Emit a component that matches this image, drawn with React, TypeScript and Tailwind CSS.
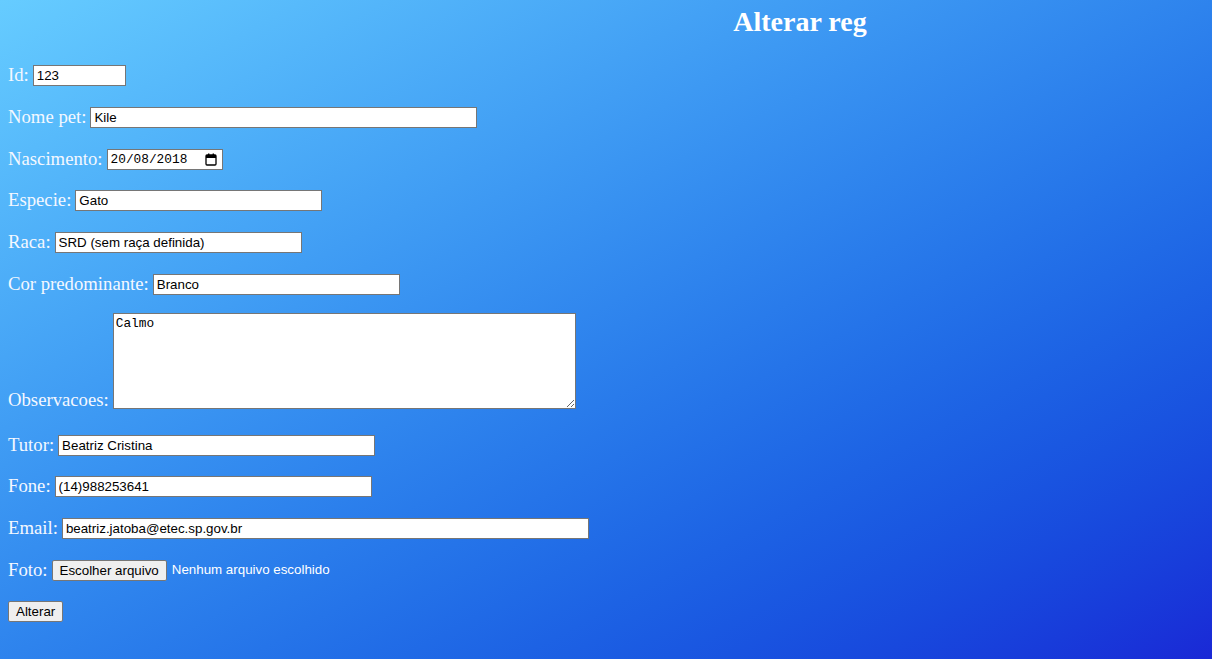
import React from "react";

const serif = { fontFamily: '"Liberation Serif", "Times New Roman", serif' };
const label = "text-[18.72px] leading-[21px] text-[#f4f8ff] whitespace-nowrap";
const input =
  "h-[21px] border border-[#767676] bg-white px-[3px] text-[13.33px] text-black outline-none";
const btn =
  "h-[21px] rounded-[2px] border border-[#767676] bg-[#efefef] px-[7px] text-[13.33px] leading-[19px] text-black";

function Row({ name, children }: { name: string; children: React.ReactNode }) {
  return (
    <div className="flex h-[21px] items-center gap-[4px]">
      <span className={`${label} pb-[2px]`} style={serif}>
        {name}
      </span>
      {children}
    </div>
  );
}

function CalendarIcon() {
  return (
    <svg width="12" height="13" viewBox="0 0 12 13" className="shrink-0">
      <rect x="1" y="2" width="10" height="10" fill="none" stroke="#000" strokeWidth="1.3" rx="1" />
      <rect x="1" y="2" width="10" height="3" fill="#000" />
      <rect x="3" y="0.5" width="1.4" height="2.5" fill="#000" />
      <rect x="7.6" y="0.5" width="1.4" height="2.5" fill="#000" />
    </svg>
  );
}

export default function App() {
  return (
    <div className="min-h-screen w-full bg-gradient-to-br from-[#66ccff] to-[#1a28d6] px-[8px]" style={serif}>
      {/* Title */}
      <div className="flex h-[38px] items-end justify-center pl-[388px]">
        <h1 className="text-[28px] font-bold leading-[32px] text-white">Alterar reg</h1>
      </div>

      <form
        className="mt-[27px] flex flex-col gap-[20.8px]"
        style={{ fontFamily: '"Liberation Sans", Arial, sans-serif' }}
        onSubmit={(e) => e.preventDefault()}
      >
        <Row name="Id:">
          <input className={`${input} w-[93px]`} defaultValue="123" />
        </Row>
        <Row name="Nome pet:">
          <input className={`${input} w-[387px]`} defaultValue="Kile" />
        </Row>
        <Row name="Nascimento:">
          <div className={`${input} flex w-[116px] items-center justify-between pl-[3px] pr-[5px]`}>
            <span className="text-[12.8px]" style={{ fontFamily: '"Liberation Mono", "DejaVu Sans Mono", monospace' }}>
              20/08/2018
            </span>
            <CalendarIcon />
          </div>
        </Row>
        <Row name="Especie:">
          <input className={`${input} w-[247px]`} defaultValue="Gato" />
        </Row>
        <Row name="Raca:">
          <input className={`${input} w-[247px]`} defaultValue="SRD (sem raça definida)" />
        </Row>
        <Row name="Cor predominante:">
          <input className={`${input} w-[247px]`} defaultValue="Branco" />
        </Row>

        <div className="-mt-[3px] mb-[5px] flex h-[96px] items-end gap-[4px]">
          <span className={`${label} -mb-[1px]`} style={serif}>
            Observacoes:
          </span>
          <textarea
            className="h-[96px] w-[463px] border border-[#767676] bg-white p-[2px] text-[12.8px] leading-[15px] text-black outline-none"
            style={{ fontFamily: '"Liberation Mono", "DejaVu Sans Mono", monospace' }}
            defaultValue="Calmo"
          />
        </div>

        <Row name="Tutor:">
          <input className={`${input} w-[317px]`} defaultValue="Beatriz Cristina" />
        </Row>
        <Row name="Fone:">
          <input className={`${input} w-[317px]`} defaultValue="(14)988253641" />
        </Row>
        <Row name="Email:">
          <input className={`${input} w-[527px]`} defaultValue="beatriz.jatoba@etec.sp.gov.br" />
        </Row>
        <Row name="Foto:">
          <div className="flex items-center gap-[5px]">
            <button type="button" className={btn}>
              Escolher arquivo
            </button>
            <span className="text-[13.33px] text-white">Nenhum arquivo escolhido</span>
          </div>
        </Row>

        <div className="-mt-[1px] flex h-[21px] items-center">
          <button type="submit" className={btn}>
            Alterar
          </button>
        </div>
      </form>
    </div>
  );
}
